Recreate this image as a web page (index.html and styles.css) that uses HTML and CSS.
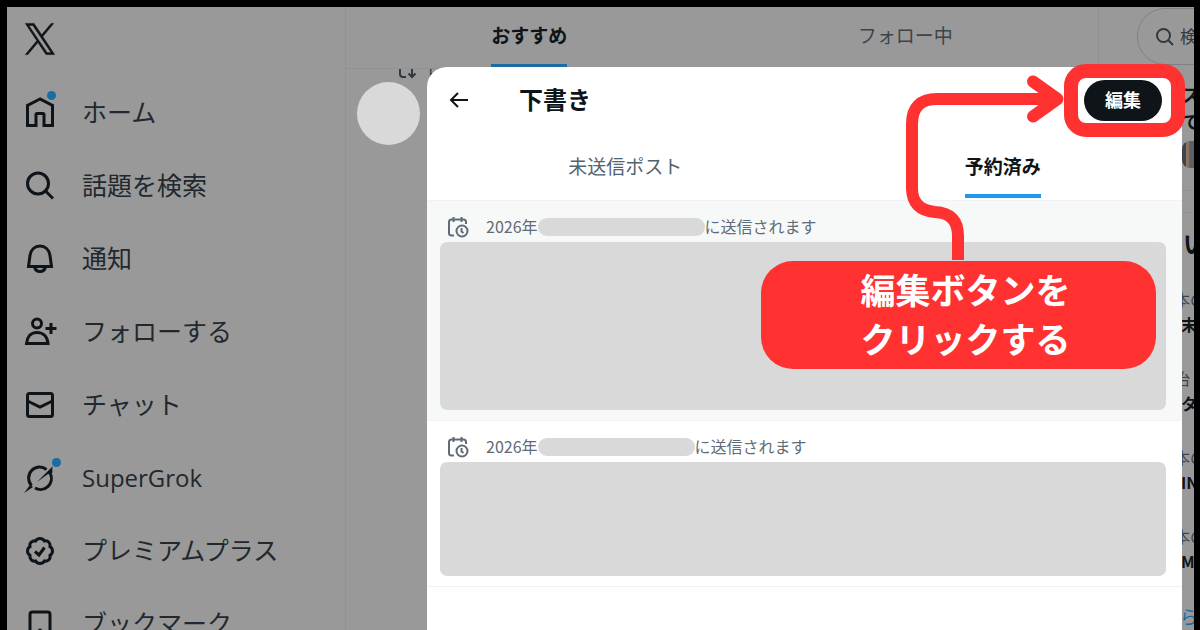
FILE: index.html
```html
<!DOCTYPE html>
<html lang="ja">
<head>
  <meta charset="UTF-8" />
  <meta name="viewport" content="width=device-width, initial-scale=1.0"/>
  <title>下書き - 予約済み</title>
  <link rel="stylesheet" href="styles.css">
</head>
<body>
  <div class="page">
    <nav class="sidebar">
      <a href="#" class="logo" aria-label="X">
        <svg width="32" height="34" viewBox="0 0 24 24" preserveAspectRatio="none"><path d="M14.095 10.316 22.286 1h-1.940l-7.115 8.088L7.551 1H1l8.589 12.231L1 23h1.941l7.509-8.543L16.449 23H23ZM11.437 13.338l-.872-1.219L3.641 2.432h2.981l5.590 7.821.868 1.219 7.265 10.166h-2.981Z"/></svg>
      </a>
      <a href="#" class="nav-item">
        <span class="icon">
          <svg viewBox="0 0 32 32"><path d="M16 2 3.500 8.500V28.500H12V17.500Q12 16.500 13 16.500H19Q20 16.500 20 17.500V28.500H28.500V8.500Z"/></svg>
          <i class="dot"></i>
        </span>
        <span class="label">ホーム</span>
      </a>
      <a href="#" class="nav-item">
        <span class="icon"><svg viewBox="0 0 32 32"><circle cx="14" cy="13.500" r="10.500"/><path d="m21.500 21 7.500 7.500"/></svg></span>
        <span class="label">話題を検索</span>
      </a>
      <a href="#" class="nav-item">
        <span class="icon"><svg viewBox="0 0 32 32"><path d="M4.500 23.500 6 12.500C6.700 6.500 11 3 16 3s9.300 3.500 10 9.500l1.500 11Z"/><path d="M10.500 24c.8 3 2.900 4.500 5.500 4.500s4.700-1.500 5.500-4.500"/></svg></span>
        <span class="label">通知</span>
      </a>
      <a href="#" class="nav-item">
        <span class="icon"><svg viewBox="0 0 32 32"><circle cx="13" cy="7.500" r="4.500"/><path d="M2.500 27.500c.5-6.500 4-11 10.500-11s10.500 4.500 11 11ZM27 7v11M21.500 12.500h11"/></svg></span>
        <span class="label">フォローする</span>
      </a>
      <a href="#" class="nav-item">
        <span class="icon"><svg viewBox="0 0 32 32"><rect x="3.500" y="4.500" width="25" height="23" rx="2"/><path d="m3.500 12 12.500 6 12.500-6"/></svg></span>
        <span class="label">チャット</span>
      </a>
      <a href="#" class="nav-item">
        <span class="icon">
          <svg viewBox="0 0 32 32"><path d="M22.500 7.500A11 11 0 0 0 7.500 23.500M26.500 12A11 11 0 0 1 11 26"/><path class="fill" d="M13 20 29 4C27 7.500 30 9 27 13L24 12ZM0 31l6.500-8.500L9 25Z"/></svg>
          <i class="dot dot-far"></i>
        </span>
        <span class="label latin">SuperGrok</span>
      </a>
      <a href="#" class="nav-item">
        <span class="icon"><svg viewBox="0 0 32 32"><path d="M16 3.500c2 0 3.500 1 4.400 2.500 1.700-.4 3.400 0 4.400 1.200s1.600 2.700 1.200 4.400C27.500 12.500 28.500 14 28.500 16s-1 3.500-2.500 4.400c.4 1.700 0 3.400-1.200 4.400s-2.700 1.600-4.400 1.200C19.500 27.500 18 28.500 16 28.500s-3.500-1-4.400-2.500c-1.700.4-3.400 0-4.400-1.200S5.600 22.100 6 20.400C4.500 19.500 3.500 18 3.500 16s1-3.500 2.500-4.400c-.4-1.700 0-3.400 1.200-4.400S9.900 5.600 11.600 6C12.500 4.500 14 3.500 16 3.500Z"/><path d="m11 16.500 4 3.500 5.500-7.500"/></svg></span>
        <span class="label">プレミアムプラス</span>
      </a>
      <a href="#" class="nav-item">
        <span class="icon"><svg viewBox="0 0 32 32"><path d="M6 29.500V6.500Q6 4 8.500 4H23.500Q26 4 26 6.500V29.500L16 22Z"/></svg></span>
        <span class="label">ブックマーク</span>
      </a>
    </nav>

    <main class="timeline">
      <div class="timeline-tabs">
        <a href="#" class="tab active">おすすめ</a>
        <a href="#" class="tab">フォロー中</a>
      </div>
      <div class="repost">
        <svg width="20" height="10" viewBox="0 0 20 10"><path d="M3 0v5q0 3 3 3h3M15 0v8M11.500 4.500 15 8l3.500-3.500"/></svg>
        <span>ト</span>
      </div>
      <div class="avatar"></div>
    </main>

    <aside class="trends">
      <div class="search">
        <svg width="20" height="20" viewBox="0 0 20 20"><circle cx="8.500" cy="8.500" r="6.500"/><path d="m13.500 13.500 4.500 4.500"/></svg>
        <input type="text" aria-label="検索" placeholder="検索">
      </div>
      <div class="news">
        <b>ス</b>
        <b>で</b>
        <span class="thumb"></span>
      </div>
      <h2>い</h2>
      <div class="trend"><small>本の</small><b>末</b></div>
      <div class="trend"><small>治</small><b>タ</b></div>
      <div class="trend"><small>本の</small><b>IN</b></div>
      <div class="trend"><small>本の</small><b>MI</b></div>
      <a href="#" class="more">ら</a>
    </aside>

    <section class="modal">
      <header class="modal-header">
        <button class="back" aria-label="戻る">
          <svg width="20" height="20" viewBox="0 0 20 20"><path d="M19 10H2M9 3l-7 7 7 7"/></svg>
        </button>
        <h1>下書き</h1>
        <div class="edit-wrap">
          <button class="edit">編集</button>
          <span class="frame"></span>
        </div>
      </header>
      <div class="modal-tabs">
        <a href="#" class="tab">未送信ポスト</a>
        <a href="#" class="tab active">予約済み</a>
      </div>
      <article class="draft selected">
        <div class="schedule">
          <svg width="24" height="24" viewBox="0 0 24 24"><path d="M8 20.500H5.500Q3 20.500 3 18V7Q3 4.500 5.500 4.500H17.500Q20 4.500 20 7V9M7.500 2v5M15.500 2v5"/><circle cx="16" cy="16" r="5.500"/><path d="M15.500 13v3.500l2 1.500"/></svg>
          <span>2026年</span><i class="mask"></i><span>に送信されます</span>
        </div>
        <div class="content tall"></div>
      </article>
      <article class="draft">
        <div class="schedule">
          <svg width="24" height="24" viewBox="0 0 24 24"><path d="M8 20.500H5.500Q3 20.500 3 18V7Q3 4.500 5.500 4.500H17.500Q20 4.500 20 7V9M7.500 2v5M15.500 2v5"/><circle cx="16" cy="16" r="5.500"/><path d="M15.500 13v3.500l2 1.500"/></svg>
          <span>2026年</span><i class="mask short"></i><span>に送信されます</span>
        </div>
        <div class="content"></div>
      </article>

      <!-- 説明用の矢印と吹き出し -->
      <svg class="arrow" width="170" height="190" viewBox="0 0 170 190"><path d="M58 190V166Q58 143 35 142Q12 140 12 118V54Q12 29 37 29H157"/><path d="m133 11.500 24.500 17.500-24.500 17.500"/></svg>
      <div class="callout">編集ボタンを<br>クリックする</div>
    </section>
  </div>
</body>
</html>
```
FILE: styles.css
```css
* {
  box-sizing: border-box;
}
body {
  margin: 0;
  padding: 7px 6px 0 7px;
  background: #000;
  color: #0f1419;
  font-family: "Noto Sans CJK JP", sans-serif;
}
a {
  color: inherit;
  text-decoration: none;
}
svg {
  fill: none;
  stroke: currentColor;
  stroke-width: 2px;
  flex-shrink: 0;
}
button {
  border: 0;
  padding: 0;
  font-family: inherit;
  cursor: pointer;
}
.page {
  position: relative;
  display: flex;
  height: calc(100vh - 7px);
  overflow: hidden;
  background: #999;
}

/* 左メニュー */
.sidebar {
  width: 339px;
  flex-shrink: 0;
  padding-left: 17px;
  border-right: 1px solid #8f9193;
}
.logo {
  display: flex;
  align-items: center;
  height: 69px;
  padding-bottom: 6px;
}
.logo svg {
  fill: currentColor;
  stroke-width: 0.4px;
}
.nav-item {
  display: flex;
  align-items: center;
  gap: 26px;
  height: 73px;
}
.label {
  padding-bottom: 4px;
  font-size: 25px;
  color: #22282d;
}
.label.latin {
  padding-bottom: 0;
  font-family: "Open Sans", sans-serif;
  font-size: 24px;
}
.icon {
  position: relative;
  width: 32px;
  height: 32px;
}
.icon svg {
  display: block;
  width: 32px;
  height: 32px;
  stroke-width: 3px;
  overflow: visible;
}
.icon .fill {
  fill: currentColor;
  stroke: none;
}
.dot {
  position: absolute;
  top: -6px;
  right: 0;
  width: 9px;
  height: 9px;
  border-radius: 50%;
  background: #1b6ca3;
}
.dot-far {
  top: -4px;
  right: -5px;
}

/* タイムライン */
.timeline {
  flex: 1;
}
.timeline-tabs {
  display: flex;
  justify-content: space-around;
  height: 62px;
  border-bottom: 1px solid #8f9193;
}
.tab {
  display: flex;
  align-items: center;
  padding-bottom: 3px;
  font-size: 19px;
  color: #536471;
  border-bottom: 4px solid transparent;
}
.tab.active {
  font-weight: bold;
  color: #0f1419;
  border-bottom-color: #1d9bf0;
}
.timeline .tab {
  color: #3c444b;
}
.timeline .tab.active {
  color: #0f1419;
  border-bottom-color: #1b6ca3;
}
.repost {
  display: flex;
  gap: 8px;
  height: 13px;
  padding-left: 51px;
  overflow: hidden;
  color: #32383d;
  font-size: 15px;
  line-height: 10px;
}
.avatar {
  width: 63px;
  height: 63px;
  margin-left: 11px;
  border-radius: 50%;
  background: #d9d9d9;
}

/* 右カラム */
.trends {
  width: 96px;
  flex-shrink: 0;
  overflow: hidden;
  border-left: 1px solid #8f9193;
  white-space: nowrap;
}
.search {
  display: flex;
  align-items: center;
  gap: 5px;
  width: 320px;
  height: 57px;
  margin: 1px 0 0 38px;
  padding-left: 17px;
  border: 1px solid #7d8183;
  border-radius: 28px;
  color: #32383d;
}
.search input {
  width: 200px;
  padding: 0 0 2px;
  border: 0;
  outline: 0;
  background: none;
  font-family: inherit;
  font-size: 17px;
}
.search input::placeholder {
  color: #32383d;
}
.news {
  display: flex;
  flex-direction: column;
  height: 126px;
  padding: 16px 0 0 83px;
  border-bottom: 1px solid #8f9193;
  font-size: 18px;
  line-height: 27px;
}
.thumb {
  width: 40px;
  height: 27px;
  margin-top: 6px;
  border-radius: 8px;
  background: linear-gradient(90deg, #3f444c 0 4px, #8f7461 4px 6px, #5d5f64 8px);
}
.trends h2 {
  height: 75px;
  margin: 21px 0 0;
  padding: 12px 0 0 84px;
  border-top: 1px solid #8f9193;
  font-size: 24px;
  line-height: 36px;
}
.trend {
  height: 79px;
  padding-left: 75px;
}
.trend small,
.trend b {
  display: block;
  font-size: 16px;
  line-height: 25px;
}
.trend small {
  color: #3c444b;
}
.trend b {
  padding-left: 7px;
}
.more {
  padding-left: 81px;
  font-size: 18px;
  color: #1b6ca3;
}

/* 下書きモーダル */
.modal {
  position: absolute;
  top: 60px;
  right: 12px;
  bottom: 0;
  left: 420px;
  border-radius: 20px 20px 0 0;
  background: #fff;
}
.modal-header {
  display: flex;
  align-items: center;
  height: 66px;
  padding: 0 20px 0 22px;
}
.back {
  height: 20px;
  background: none;
  color: #0f1419;
}
.modal-header h1 {
  flex: 1;
  margin: 0 0 0 50px;
  padding-bottom: 4px;
  font-size: 24px;
}
.edit-wrap {
  position: relative;
}
.edit {
  display: block;
  width: 78px;
  height: 41px;
  padding-bottom: 3px;
  border-radius: 21px;
  background: #0f1419;
  color: #fff;
  font-size: 18px;
  font-weight: bold;
}
.frame {
  position: absolute;
  top: -16px;
  right: -23px;
  bottom: -16px;
  left: -20px;
  border: 14px solid #ff3131;
  border-radius: 22px;
}
.modal-tabs {
  display: flex;
  justify-content: space-around;
  height: 68px;
  padding-bottom: 2px;
  border-bottom: 1px solid #eff3f4;
}
.modal-tabs .tab {
  padding: 3px 0 0;
}
.draft {
  padding: 11px 16px 10px 13px;
  border-bottom: 1px solid #eff3f4;
}
.draft.selected {
  background: #f7f9f9;
}
.schedule {
  display: flex;
  align-items: center;
  height: 30px;
  padding-left: 6px;
  font-size: 16px;
  color: #5f6b76;
}
.schedule span {
  padding-bottom: 3px;
}
.schedule svg {
  margin-right: 16px;
}
.mask {
  width: 167px;
  height: 18px;
  border-radius: 9px;
  background: #d9d9d9;
}
.mask.short {
  width: 157px;
}
.content {
  height: 114px;
  border-radius: 7px;
  background: #d9d9d9;
}
.content.tall {
  height: 168px;
}

.arrow {
  position: absolute;
  top: 3px;
  right: 112px;
  color: #ff3131;
  stroke-width: 12px;
  stroke-linecap: round;
  stroke-linejoin: round;
}
.callout {
  position: absolute;
  top: 194px;
  right: 26px;
  width: 395px;
  padding: 3px 0 7px 14px;
  border-radius: 32px;
  background: #ff3131;
  color: #fff;
  font-size: 35px;
  font-weight: bold;
  line-height: 49px;
  text-align: center;
}
```
